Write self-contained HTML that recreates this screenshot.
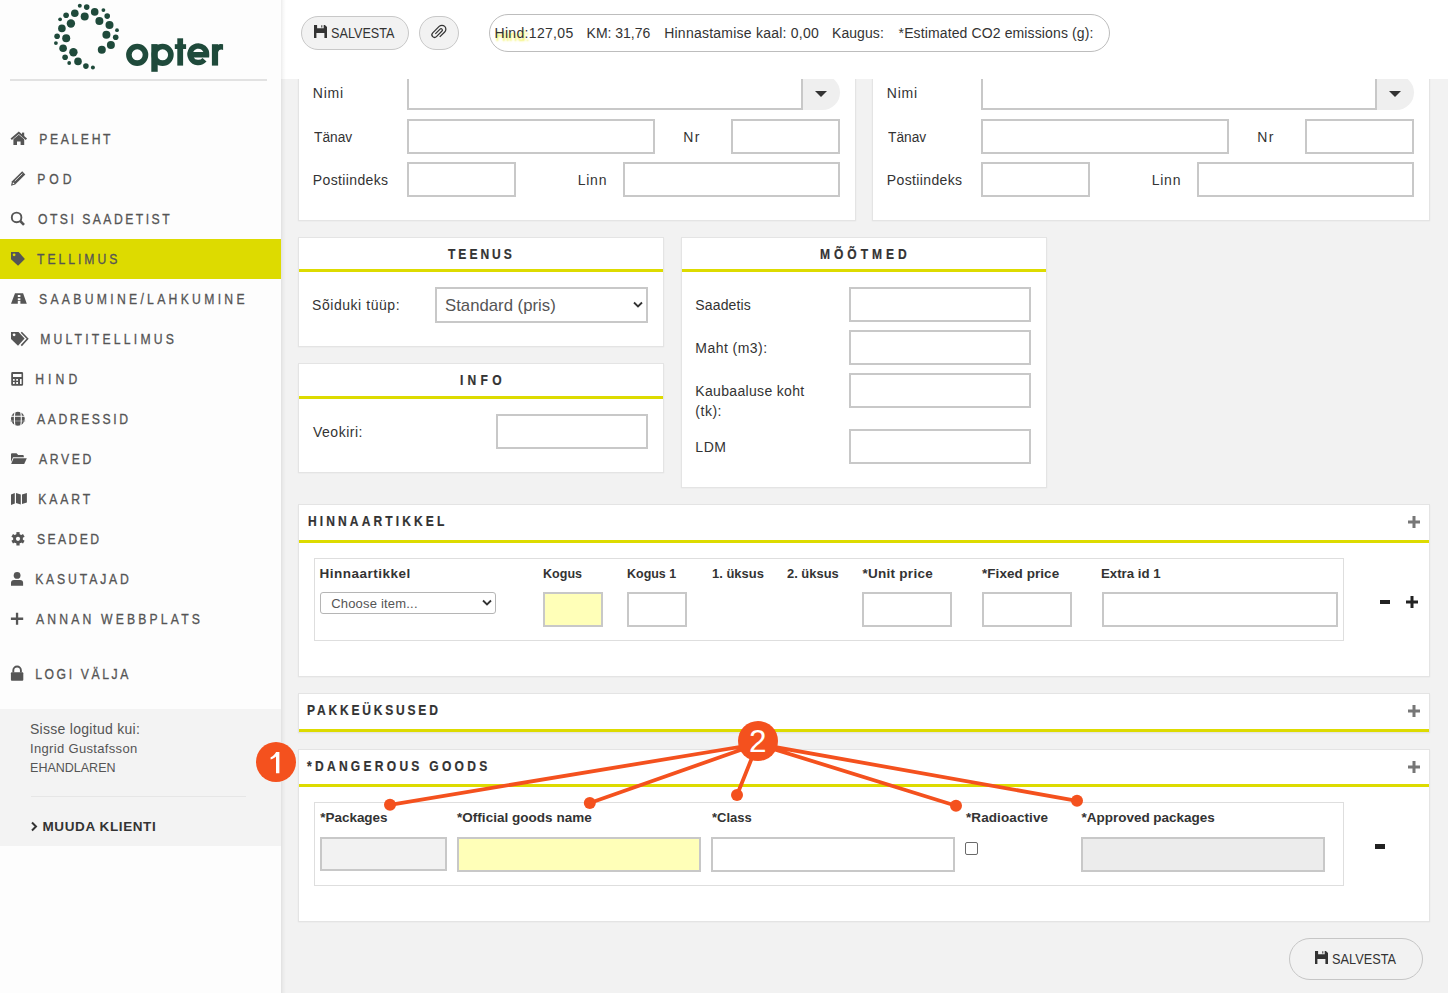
<!DOCTYPE html>
<html><head><meta charset="utf-8"><title>Opter</title>
<style>
html,body{margin:0;padding:0}
body{width:1448px;height:993px;overflow:hidden;background:#f2f2f2;position:relative;font-family:"Liberation Sans",sans-serif}
.a{position:absolute}
.t{position:absolute;white-space:nowrap}
.p{position:absolute;background:#fff;border:1px solid #e4e4e4;box-sizing:border-box;box-shadow:0 0.5px 1.5px rgba(0,0,0,.06)}
.in{position:absolute;box-sizing:border-box;border:2px solid #c8c8c8;background:#fff}
</style></head><body>
<div class="p" style="left:298px;top:60px;width:558px;height:161px;"></div>
<div class="in" style="left:407px;top:75px;width:396px;height:35px;background:#fff"></div>
<div class="a" style="left:803px;top:75px;width:37px;height:35px;background:#efefef;border-radius:0 17.5px 17.5px 0"></div>
<svg class="a" style="left:814px;top:90px" width="14" height="8"><path d="M1 1H13L7 7Z" fill="#333"/></svg>
<div class="in" style="left:407px;top:119px;width:248px;height:35px;background:#fff"></div>
<div class="in" style="left:731px;top:119px;width:109px;height:35px;background:#fff"></div>
<div class="in" style="left:407px;top:162px;width:109px;height:35px;background:#fff"></div>
<div class="in" style="left:623px;top:162px;width:217px;height:35px;background:#fff"></div>
<div class="p" style="left:872px;top:60px;width:558px;height:161px;"></div>
<div class="in" style="left:981px;top:75px;width:396px;height:35px;background:#fff"></div>
<div class="a" style="left:1377px;top:75px;width:37px;height:35px;background:#efefef;border-radius:0 17.5px 17.5px 0"></div>
<svg class="a" style="left:1388px;top:90px" width="14" height="8"><path d="M1 1H13L7 7Z" fill="#333"/></svg>
<div class="in" style="left:981px;top:119px;width:248px;height:35px;background:#fff"></div>
<div class="in" style="left:1305px;top:119px;width:109px;height:35px;background:#fff"></div>
<div class="in" style="left:981px;top:162px;width:109px;height:35px;background:#fff"></div>
<div class="in" style="left:1197px;top:162px;width:217px;height:35px;background:#fff"></div>
<div class="p" style="left:298px;top:237px;width:366px;height:110px;"></div>
<div class="a" style="left:299px;top:269px;width:364px;height:3px;background:#dddb00"></div>
<div class="in" style="left:435px;top:287px;width:213px;height:36px;background:#fff"></div>
<svg class="a" style="left:632px;top:300px" width="12" height="10"><path d="M2 2.5L6 6.5L10 2.5" fill="none" stroke="#333" stroke-width="1.8"/></svg>
<div class="p" style="left:298px;top:363px;width:366px;height:110px;"></div>
<div class="a" style="left:299px;top:396px;width:364px;height:3px;background:#dddb00"></div>
<div class="in" style="left:496px;top:414px;width:152px;height:35px;background:#fff"></div>
<div class="p" style="left:681px;top:237px;width:366px;height:251px;"></div>
<div class="a" style="left:682px;top:269px;width:364px;height:3px;background:#dddb00"></div>
<div class="in" style="left:849px;top:287px;width:182px;height:35px;background:#fff"></div>
<div class="in" style="left:849px;top:330px;width:182px;height:35px;background:#fff"></div>
<div class="in" style="left:849px;top:373px;width:182px;height:35px;background:#fff"></div>
<div class="in" style="left:849px;top:429px;width:182px;height:35px;background:#fff"></div>
<div class="p" style="left:298px;top:504px;width:1132px;height:173px;"></div>
<div class="a" style="left:299px;top:540px;width:1130px;height:3px;background:#dddb00"></div>
<div class="a" style="left:314px;top:558px;width:1030px;height:83px;border:1px solid #dedede;box-sizing:border-box"></div>
<div class="a" style="left:320px;top:592px;width:176px;height:22px;border:1px solid #b5b5b5;border-radius:3px;box-sizing:border-box;background:#fff"></div>
<svg class="a" style="left:480px;top:597px" width="14" height="12"><path d="M3 3.5L7 7.5L11 3.5" fill="none" stroke="#333" stroke-width="1.8"/></svg>
<div class="in" style="left:543px;top:592px;width:60px;height:35px;background:#ffffb8"></div>
<div class="in" style="left:627px;top:592px;width:60px;height:35px;background:#fff"></div>
<div class="in" style="left:862px;top:592px;width:90px;height:35px;background:#fff"></div>
<div class="in" style="left:982px;top:592px;width:90px;height:35px;background:#fff"></div>
<div class="in" style="left:1102px;top:592px;width:236px;height:35px;background:#fff"></div>
<svg class="a" style="left:1408px;top:516px" width="12" height="12"><path d="M6.0 0V12M0 6.0H12" stroke="#777" stroke-width="3"/></svg>
<div class="a" style="left:1380px;top:600px;width:10px;height:4px;background:#222"></div>
<svg class="a" style="left:1406px;top:596px" width="12" height="12"><path d="M6.0 0V12M0 6.0H12" stroke="#222" stroke-width="3"/></svg>
<div class="p" style="left:298px;top:693px;width:1132px;height:40px;"></div>
<div class="a" style="left:299px;top:729px;width:1130px;height:3px;background:#dddb00"></div>
<svg class="a" style="left:1408px;top:705px" width="12" height="12"><path d="M6.0 0V12M0 6.0H12" stroke="#777" stroke-width="3"/></svg>
<div class="p" style="left:298px;top:749px;width:1132px;height:173px;"></div>
<div class="a" style="left:299px;top:784px;width:1130px;height:3px;background:#dddb00"></div>
<svg class="a" style="left:1408px;top:761px" width="12" height="12"><path d="M6.0 0V12M0 6.0H12" stroke="#777" stroke-width="3"/></svg>
<div class="a" style="left:314px;top:802px;width:1030px;height:84px;border:1px solid #dedede;box-sizing:border-box"></div>
<div class="in" style="left:320px;top:837px;width:127px;height:34px;background:#f2f2f2"></div>
<div class="in" style="left:457px;top:837px;width:244px;height:35px;background:#ffffb8"></div>
<div class="in" style="left:711px;top:837px;width:244px;height:35px;background:#fff"></div>
<div class="a" style="left:965px;top:842px;width:13px;height:13px;border:1px solid #6a6a6a;border-radius:2px;box-sizing:border-box;background:#fff"></div>
<div class="in" style="left:1081px;top:837px;width:244px;height:35px;background:#ececec"></div>
<div class="a" style="left:1375px;top:844px;width:10px;height:5px;background:#222"></div>
<div class="a" style="left:1289px;top:938px;width:134px;height:42px;border:1px solid #c6c6c6;border-radius:21px;box-sizing:border-box;background:#f2f2f2"></div>
<svg class="a" style="left:1314.8px;top:951px" width="13.3" height="13.2" viewBox="0 0 13.3 13.2"><path fill="#333" fill-rule="evenodd" d="M0 0H10.9L13.3 2.4V13.2H0ZM3.1 0V3.2H9.7V0ZM7.3 0.3V2.4H8.3V0.3ZM2.4 8V13.2H10.4V8Z"/></svg>
<div class="a" style="left:281px;top:0;width:1167px;height:79px;background:#fff;z-index:2"></div>
<div class="a" style="left:0;top:0;width:281px;height:993px;background:#fdfdfd;z-index:2"></div>
<div class="a" style="left:281px;top:0;width:6px;height:993px;background:linear-gradient(to right,rgba(0,0,0,.075),rgba(0,0,0,.03) 2px,rgba(0,0,0,0) 5px);z-index:3"></div>
<div id="side" class="a" style="left:0;top:0;width:1448px;height:993px;z-index:4">
<svg class="a" style="left:0;top:0" width="281" height="80"><g fill="#1f4a3b"><circle cx="79.8" cy="5.8" r="2.0"/><circle cx="86.7" cy="7.1" r="2.8"/><circle cx="94.7" cy="11.9" r="3.8"/><circle cx="103.4" cy="10.1" r="1.9"/><circle cx="107.2" cy="16.1" r="2.8"/><circle cx="74.8" cy="13.3" r="3.8"/><circle cx="84.7" cy="16.5" r="4.0"/><circle cx="66.1" cy="15.3" r="2.8"/><circle cx="60.1" cy="19.3" r="1.9"/><circle cx="70.9" cy="23.5" r="4.2"/><circle cx="99.4" cy="21.1" r="4.0"/><circle cx="109.5" cy="25.0" r="4.0"/><circle cx="117.0" cy="30.2" r="1.9"/><circle cx="61.9" cy="28.4" r="3.8"/><circle cx="57.1" cy="36.3" r="2.8"/><circle cx="66.2" cy="38.3" r="4.0"/><circle cx="106.4" cy="34.8" r="4.0"/><circle cx="115.7" cy="37.2" r="2.8"/><circle cx="55.9" cy="43.1" r="1.9"/><circle cx="63.1" cy="48.2" r="3.8"/><circle cx="73.4" cy="52.2" r="4.2"/><circle cx="110.9" cy="45.0" r="4.0"/><circle cx="101.8" cy="49.8" r="4.0"/><circle cx="65.1" cy="57.2" r="2.8"/><circle cx="78.0" cy="61.4" r="3.8"/><circle cx="69.2" cy="63.0" r="1.9"/><circle cx="85.9" cy="66.1" r="2.8"/><circle cx="92.9" cy="67.5" r="2.0"/>
<circle cx="137.2" cy="54.8" r="8.3" fill="none" stroke="#1f4a3b" stroke-width="5.6"/>
<rect x="151.3" y="44.1" width="6.4" height="27.7"/>
<circle cx="162.6" cy="54.8" r="8.3" fill="none" stroke="#1f4a3b" stroke-width="5.6"/>
<rect x="177.3" y="38.3" width="5.8" height="27.3"/>
<rect x="174.8" y="44.2" width="11.3" height="4.8"/>
<path d="M204.5 59.8A8.3 8.3 0 1 1 206.6 54.8H192" fill="none" stroke="#1f4a3b" stroke-width="5.4"/>
<rect x="211.9" y="44.2" width="6.2" height="21.4"/>
<path d="M215 50.5A6 6 0 0 1 223.1 44.3V49.9A4 4 0 0 0 218 52Z"/>
</g></svg>
<div class="a" style="left:10px;top:79px;width:257px;height:2px;background:#e2e2e2"></div>
<div class="a" style="left:0;top:239px;width:281px;height:40px;background:#dddb00"></div>

<svg class="a" style="left:0;top:0" width="281" height="700">
<g fill="#555">
 <path d="M11.2 139.2L18.8 132.8L26.4 139.2" fill="none" stroke="#555" stroke-width="2"/>
 <rect x="22" y="132.6" width="2.2" height="4.6"/>
 <path d="M13.4 139.2L18.8 134.8L24.2 139.2V145H20.6V141.4H17V145H13.4Z"/>
 <path d="M11 185.8L12 181.2L22.2 171.2L25.3 174.4L15.2 184.6Z"/>
 <path d="M12.6 184.2L13 182.2L14.6 183.8Z" fill="#fdfdfd"/>
 <path d="M14.8 181L22.4 173.6" stroke="#fdfdfd" stroke-width="0.8"/>
 <circle cx="16.6" cy="217.4" r="4.8" fill="none" stroke="#555" stroke-width="1.9"/>
 <path d="M20.2 221L24 224.8" stroke="#555" stroke-width="2.6"/>
 <path d="M11 252.1H18.7L24.9 258.9L18.1 265.8L11 259.2Z"/>
 <circle cx="14.1" cy="254.8" r="1.4" fill="#dddb00"/>
 <path d="M15 293.2H17.8V303.7H11Z M20.4 293.2H23.1L26.8 303.7H20.4Z M17.8 293.2H20.4V295H17.8Z M17.8 297.1H20.4V298.3H17.8Z M17.8 300.1H20.4V300.8H17.8Z"/>
 <path d="M11 332H18.5L24.6 338.6L18 345.8L11 339Z"/>
 <circle cx="14.1" cy="334.8" r="1.4" fill="#fdfdfd"/>
 <path d="M21.3 332.3L27.6 338.8L21.3 345.6" fill="none" stroke="#555" stroke-width="1.6"/>
 <path fill-rule="evenodd" d="M12.5 372H21.8A1.3 1.3 0 0 1 23.1 373.3V384.4A1.3 1.3 0 0 1 21.8 385.7H12.5A1.3 1.3 0 0 1 11.2 384.4V373.3A1.3 1.3 0 0 1 12.5 372ZM13 373.9V376.9H21.5V373.9ZM13 378.9V380.7H14.7V378.9ZM16.2 378.9V380.7H18V378.9ZM13 382.1V383.9H14.7V382.1ZM16.2 382.1V383.9H18V382.1ZM20 378.9V383.9H21.6V378.9Z"/>
 <circle cx="17.85" cy="418.75" r="6.9"/>
 <path d="M10.5 421H25.2" stroke="#9a9a9a" stroke-width="1"/>
 <path d="M10.5 416.3H25.2M15 411.8C14.2 415 14.2 422.5 15 425.8M20.7 411.8C21.5 415 21.5 422.5 20.7 425.8" fill="none" stroke="#fdfdfd" stroke-width="1.1"/>
 <path d="M11 454.2A1 1 0 0 1 12 453.2H16.5L18.2 455H22.8A1 1 0 0 1 23.8 456V457.2H13L11 462Z"/>
 <path d="M13.5 458.2H26.8L24.2 463.9H11.2Z"/>
 <path d="M11 494.4L14.8 493V503.6L11 505Z M16 493L20.8 494.5V504.5L16 503Z M22 494.5L26.9 493V502.6L22 504Z"/>
 <circle cx="18" cy="538.8" r="4.9"/>
 <g transform="translate(18 538.8)">
  <rect x="-1.6" y="-6.7" width="3.2" height="13.4"/>
  <rect x="-1.6" y="-6.7" width="3.2" height="13.4" transform="rotate(60)"/>
  <rect x="-1.6" y="-6.7" width="3.2" height="13.4" transform="rotate(120)"/>
 </g>
 <circle cx="18" cy="538.8" r="2.1" fill="#fdfdfd"/>
 <circle cx="17.1" cy="575.4" r="3.4"/>
 <path d="M14 580H20.1A3 3 0 0 1 23.1 583V585.8H11V583A3 3 0 0 1 14 580Z"/>
 <path d="M17.05 612.7V624.8M10.9 618.75H23.2" stroke="#555" stroke-width="2.3"/>
 <path d="M13.3 672.5V670.3A3.8 3.8 0 0 1 20.9 670.3V672.5" fill="none" stroke="#555" stroke-width="1.9"/>
 <rect x="10.9" y="672.2" width="12.4" height="8.6" rx="1"/>
</g>
</svg>
<div class="a" style="left:0;top:709px;width:281px;height:137px;background:#f3f3f3"></div>
<div class="a" style="left:31px;top:796px;width:215px;height:1px;background:#e6e6e6"></div>
<svg class="a" style="left:30px;top:821px" width="9" height="11"><path d="M2 1.5L6 5.5L2 9.5" fill="none" stroke="#333" stroke-width="2"/></svg>
<div class="a" style="left:301px;top:16px;width:108px;height:34px;border:1px solid #c8c8c8;border-radius:17px;box-sizing:border-box;background:#f2f2f2"></div>
<svg class="a" style="left:313.8px;top:24.8px" width="13.3" height="13.2" viewBox="0 0 13.3 13.2"><path fill="#333" fill-rule="evenodd" d="M0 0H10.9L13.3 2.4V13.2H0ZM3.1 0V3.2H9.7V0ZM7.3 0.3V2.4H8.3V0.3ZM2.4 8V13.2H10.4V8Z"/></svg>
<div class="a" style="left:419px;top:16px;width:40px;height:34px;border:1px solid #c8c8c8;border-radius:17px;box-sizing:border-box;background:#f2f2f2"></div>
<svg class="a" style="left:424px;top:18px" width="30" height="28"><path d="M-1.6 4.2V-4.2A1.7 1.7 0 0 1 1.8 -4.2V5.6A3.3 3.3 0 0 1 -4.8 5.6V-5.8A4.9 4.9 0 0 1 5 -5.8V3" fill="none" stroke="#333" stroke-width="1.25" transform="translate(14.6 14.4) rotate(45) scale(0.8)" vector-effect="non-scaling-stroke"/></svg>
<div class="a" style="left:489px;top:14px;width:621px;height:38px;border:1px solid #bdbdbd;border-radius:19px;box-sizing:border-box;background:#fff"></div>
<div class="t" style="left:38.60px;top:131px;font-size:14px;line-height:16px;color:#555;letter-spacing:3.044px;transform:scaleX(0.87);transform-origin:1px 0;-webkit-text-stroke:0.3px #555;">PEALEHT</div>
<div class="t" style="left:36.70px;top:171px;font-size:14px;line-height:16px;color:#555;letter-spacing:4.580px;transform:scaleX(0.87);transform-origin:1px 0;-webkit-text-stroke:0.3px #555;">POD</div>
<div class="t" style="left:37.60px;top:211px;font-size:14px;line-height:16px;color:#555;letter-spacing:2.843px;transform:scaleX(0.87);transform-origin:0px 0;-webkit-text-stroke:0.3px #555;">OTSI SAADETIST</div>
<div class="t" style="left:37.10px;top:251px;font-size:14px;line-height:16px;color:#555;letter-spacing:3.406px;transform:scaleX(0.87);transform-origin:0px 0;-webkit-text-stroke:0.3px #555;">TELLIMUS</div>
<div class="t" style="left:39.20px;top:291px;font-size:14px;line-height:16px;color:#555;letter-spacing:3.789px;transform:scaleX(0.87);transform-origin:0px 0;-webkit-text-stroke:0.3px #555;">SAABUMINE/LAHKUMINE</div>
<div class="t" style="left:40.30px;top:331px;font-size:14px;line-height:16px;color:#555;letter-spacing:3.692px;transform:scaleX(0.87);transform-origin:1px 0;-webkit-text-stroke:0.3px #555;">MULTITELLIMUS</div>
<div class="t" style="left:35.00px;top:371px;font-size:14px;line-height:16px;color:#555;letter-spacing:4.747px;transform:scaleX(0.87);transform-origin:1px 0;-webkit-text-stroke:0.3px #555;">HIND</div>
<div class="t" style="left:36.80px;top:411px;font-size:14px;line-height:16px;color:#555;letter-spacing:2.964px;transform:scaleX(0.87);transform-origin:0px 0;-webkit-text-stroke:0.3px #555;">AADRESSID</div>
<div class="t" style="left:39.40px;top:451px;font-size:14px;line-height:16px;color:#555;letter-spacing:3.000px;transform:scaleX(0.87);transform-origin:0px 0;-webkit-text-stroke:0.3px #555;">ARVED</div>
<div class="t" style="left:38.40px;top:491px;font-size:14px;line-height:16px;color:#555;letter-spacing:3.385px;transform:scaleX(0.87);transform-origin:1px 0;-webkit-text-stroke:0.3px #555;">KAART</div>
<div class="t" style="left:37.30px;top:531px;font-size:14px;line-height:16px;color:#555;letter-spacing:2.768px;transform:scaleX(0.87);transform-origin:0px 0;-webkit-text-stroke:0.3px #555;">SEADED</div>
<div class="t" style="left:35.00px;top:571px;font-size:14px;line-height:16px;color:#555;letter-spacing:3.290px;transform:scaleX(0.87);transform-origin:1px 0;-webkit-text-stroke:0.3px #555;">KASUTAJAD</div>
<div class="t" style="left:35.70px;top:611px;font-size:14px;line-height:16px;color:#555;letter-spacing:3.638px;transform:scaleX(0.87);transform-origin:0px 0;-webkit-text-stroke:0.3px #555;">ANNAN WEBBPLATS</div>
<div class="t" style="left:35.30px;top:666px;font-size:14px;line-height:16px;color:#555;letter-spacing:3.001px;transform:scaleX(0.87);transform-origin:1px 0;-webkit-text-stroke:0.3px #555;">LOGI VÄLJA</div>
<div class="t" style="left:30.00px;top:721px;font-size:14px;line-height:16px;color:#555;letter-spacing:0.282px;">Sisse logitud kui:</div>
<div class="t" style="left:30.00px;top:741px;font-size:13px;line-height:15px;color:#555;letter-spacing:0.331px;">Ingrid Gustafsson</div>
<div class="t" style="left:30.00px;top:760px;font-size:13px;line-height:15px;color:#555;letter-spacing:0.000px;transform:scaleX(0.9621);transform-origin:1px 0;">EHANDLAREN</div>
<div class="t" style="left:42.50px;top:819px;font-size:13.5px;line-height:15px;color:#333;letter-spacing:0.600px;font-weight:bold;">MUUDA KLIENTI</div>
<div class="t" style="left:331.30px;top:25px;font-size:14px;line-height:16px;color:#333;letter-spacing:0.000px;transform:scaleX(0.9014);transform-origin:1px 0;">SALVESTA</div>
<div class="t" style="left:494.50px;top:25px;font-size:14px;line-height:16px;color:#333;letter-spacing:0.320px;"><span style="text-shadow:1px 3px 2px rgba(235,235,0,.75)">Hind:</span>127,05</div>
<div class="t" style="left:586.60px;top:25px;font-size:14px;line-height:16px;color:#333;letter-spacing:-0.013px;">KM: 31,76</div>
<div class="t" style="left:664.20px;top:25px;font-size:14px;line-height:16px;color:#333;letter-spacing:0.232px;">Hinnastamise kaal: 0,00</div>
<div class="t" style="left:832.00px;top:25px;font-size:14px;line-height:16px;color:#333;letter-spacing:0.067px;">Kaugus:</div>
<div class="t" style="left:898.60px;top:25px;font-size:14px;line-height:16px;color:#333;letter-spacing:0.121px;">*Estimated CO2 emissions (g):</div>
<div class="t" style="left:312.80px;top:85px;font-size:14px;line-height:16px;color:#333;letter-spacing:0.800px;">Nimi</div>
<div class="t" style="left:313.80px;top:129px;font-size:14px;line-height:16px;color:#333;letter-spacing:0.000px;transform:scaleX(0.9795);transform-origin:0px 0;">Tänav</div>
<div class="t" style="left:312.80px;top:172px;font-size:14px;line-height:16px;color:#333;letter-spacing:0.370px;">Postiindeks</div>
<div class="t" style="left:683.30px;top:129px;font-size:14px;line-height:16px;color:#333;letter-spacing:1.400px;">Nr</div>
<div class="t" style="left:577.70px;top:172px;font-size:14px;line-height:16px;color:#333;letter-spacing:0.767px;">Linn</div>
<div class="t" style="left:886.80px;top:85px;font-size:14px;line-height:16px;color:#333;letter-spacing:0.800px;">Nimi</div>
<div class="t" style="left:887.80px;top:129px;font-size:14px;line-height:16px;color:#333;letter-spacing:0.000px;transform:scaleX(0.9795);transform-origin:0px 0;">Tänav</div>
<div class="t" style="left:886.80px;top:172px;font-size:14px;line-height:16px;color:#333;letter-spacing:0.370px;">Postiindeks</div>
<div class="t" style="left:1257.30px;top:129px;font-size:14px;line-height:16px;color:#333;letter-spacing:1.400px;">Nr</div>
<div class="t" style="left:1151.70px;top:172px;font-size:14px;line-height:16px;color:#333;letter-spacing:0.767px;">Linn</div>
<div class="t" style="left:448.40px;top:246px;font-size:14px;line-height:16px;color:#333;letter-spacing:3.484px;transform:scaleX(0.86);transform-origin:0px 0;font-weight:bold;-webkit-text-stroke:0.2px #333;">TEENUS</div>
<div class="t" style="left:312.00px;top:297px;font-size:14px;line-height:16px;color:#333;letter-spacing:0.550px;">Sõiduki tüüp:</div>
<div class="t" style="left:444.70px;top:296px;font-size:17px;line-height:19px;color:#555;letter-spacing:0.000px;transform:scaleX(0.9847);transform-origin:1px 0;">Standard (pris)</div>
<div class="t" style="left:459.80px;top:372px;font-size:14px;line-height:16px;color:#333;letter-spacing:4.969px;transform:scaleX(0.86);transform-origin:0px 0;font-weight:bold;-webkit-text-stroke:0.2px #333;">INFO</div>
<div class="t" style="left:313.00px;top:424px;font-size:14px;line-height:16px;color:#333;letter-spacing:0.500px;">Veokiri:</div>
<div class="t" style="left:820.10px;top:246px;font-size:14px;line-height:16px;color:#333;letter-spacing:4.636px;transform:scaleX(0.86);transform-origin:0px 0;font-weight:bold;-webkit-text-stroke:0.2px #333;">MÕÕTMED</div>
<div class="t" style="left:695.30px;top:297px;font-size:14px;line-height:16px;color:#333;letter-spacing:0.143px;">Saadetis</div>
<div class="t" style="left:695.30px;top:340px;font-size:14px;line-height:16px;color:#333;letter-spacing:0.456px;">Maht (m3):</div>
<div class="t" style="left:695.30px;top:383px;font-size:14px;line-height:16px;color:#333;letter-spacing:0.329px;">Kaubaaluse koht</div>
<div class="t" style="left:695.30px;top:403px;font-size:14px;line-height:16px;color:#333;letter-spacing:0.525px;">(tk):</div>
<div class="t" style="left:695.30px;top:439px;font-size:14px;line-height:16px;color:#333;letter-spacing:0.550px;">LDM</div>
<div class="t" style="left:308.00px;top:513px;font-size:14px;line-height:16px;color:#333;letter-spacing:3.614px;transform:scaleX(0.86);transform-origin:0px 0;font-weight:bold;-webkit-text-stroke:0.2px #333;">HINNAARTIKKEL</div>
<div class="t" style="left:319.50px;top:566px;font-size:13.5px;line-height:15px;color:#333;letter-spacing:0.492px;font-weight:bold;">Hinnaartikkel</div>
<div class="t" style="left:331.20px;top:596px;font-size:13px;line-height:15px;color:#555;letter-spacing:0.192px;">Choose item...</div>
<div class="t" style="left:543.10px;top:566px;font-size:13.5px;line-height:15px;color:#333;letter-spacing:0.000px;transform:scaleX(0.9268);transform-origin:1px 0;font-weight:bold;">Kogus</div>
<div class="t" style="left:627.10px;top:566px;font-size:13.5px;line-height:15px;color:#333;letter-spacing:0.000px;transform:scaleX(0.9212);transform-origin:1px 0;font-weight:bold;">Kogus 1</div>
<div class="t" style="left:711.70px;top:566px;font-size:13.5px;line-height:15px;color:#333;letter-spacing:0.000px;transform:scaleX(0.9604);transform-origin:1px 0;font-weight:bold;">1. üksus</div>
<div class="t" style="left:786.60px;top:566px;font-size:13.5px;line-height:15px;color:#333;letter-spacing:0.000px;transform:scaleX(0.9574);transform-origin:0px 0;font-weight:bold;">2. üksus</div>
<div class="t" style="left:862.40px;top:566px;font-size:13.5px;line-height:15px;color:#333;letter-spacing:0.280px;font-weight:bold;">*Unit price</div>
<div class="t" style="left:982.00px;top:566px;font-size:13.5px;line-height:15px;color:#333;letter-spacing:0.055px;font-weight:bold;">*Fixed price</div>
<div class="t" style="left:1101.00px;top:566px;font-size:13.5px;line-height:15px;color:#333;letter-spacing:0.000px;transform:scaleX(0.9800);transform-origin:1px 0;font-weight:bold;">Extra id 1</div>
<div class="t" style="left:307.40px;top:702px;font-size:14px;line-height:16px;color:#333;letter-spacing:3.249px;transform:scaleX(0.86);transform-origin:0px 0;font-weight:bold;-webkit-text-stroke:0.2px #333;">PAKKEÜKSUSED</div>
<div class="t" style="left:307.40px;top:758px;font-size:14px;line-height:16px;color:#333;letter-spacing:3.805px;transform:scaleX(0.86);transform-origin:0px 0;font-weight:bold;-webkit-text-stroke:0.2px #333;">*DANGEROUS GOODS</div>
<div class="t" style="left:320.30px;top:810px;font-size:13.5px;line-height:15px;color:#333;letter-spacing:-0.037px;font-weight:bold;">*Packages</div>
<div class="t" style="left:457.00px;top:810px;font-size:13.5px;line-height:15px;color:#333;letter-spacing:0.026px;font-weight:bold;">*Official goods name</div>
<div class="t" style="left:711.60px;top:810px;font-size:13.5px;line-height:15px;color:#333;letter-spacing:0.000px;transform:scaleX(0.9634);transform-origin:0px 0;font-weight:bold;">*Class</div>
<div class="t" style="left:966.00px;top:810px;font-size:13.5px;line-height:15px;color:#333;letter-spacing:0.091px;font-weight:bold;">*Radioactive</div>
<div class="t" style="left:1081.60px;top:810px;font-size:13.5px;line-height:15px;color:#333;letter-spacing:-0.024px;font-weight:bold;">*Approved packages</div>
<div class="t" style="left:1332.30px;top:951px;font-size:14px;line-height:16px;color:#333;letter-spacing:0.000px;transform:scaleX(0.9086);transform-origin:1px 0;">SALVESTA</div>
</div>
<svg class="a" style="left:0;top:0;z-index:10" width="1448" height="993">
<g stroke="#f4511e" stroke-width="3.8" fill="none">
<path d="M757.5 744L390 804.8M757.5 744L589.8 803M757.5 744L737 795M757.5 744L956 805.8M757.5 744L1077 800.8"/>
</g>
<g fill="#f4511e">
<circle cx="390" cy="804.8" r="6"/><circle cx="589.8" cy="803" r="6"/><circle cx="737" cy="795" r="6"/><circle cx="956" cy="805.8" r="6"/><circle cx="1077" cy="800.8" r="6"/>
<circle cx="758" cy="741" r="20"/><circle cx="276" cy="762" r="20"/>
</g>
<text x="757.8" y="752.2" font-family="Liberation Sans" font-size="31.5" fill="#fff" text-anchor="middle">2</text>
<path fill="#fff" d="M276.1 751.9H279.4V773.2H276V756.6C274.6 757.9 272.6 759 270.6 759.6V757.2C272.8 756.4 274.8 754.6 276.1 751.9Z"/>
</svg>
</body></html>
